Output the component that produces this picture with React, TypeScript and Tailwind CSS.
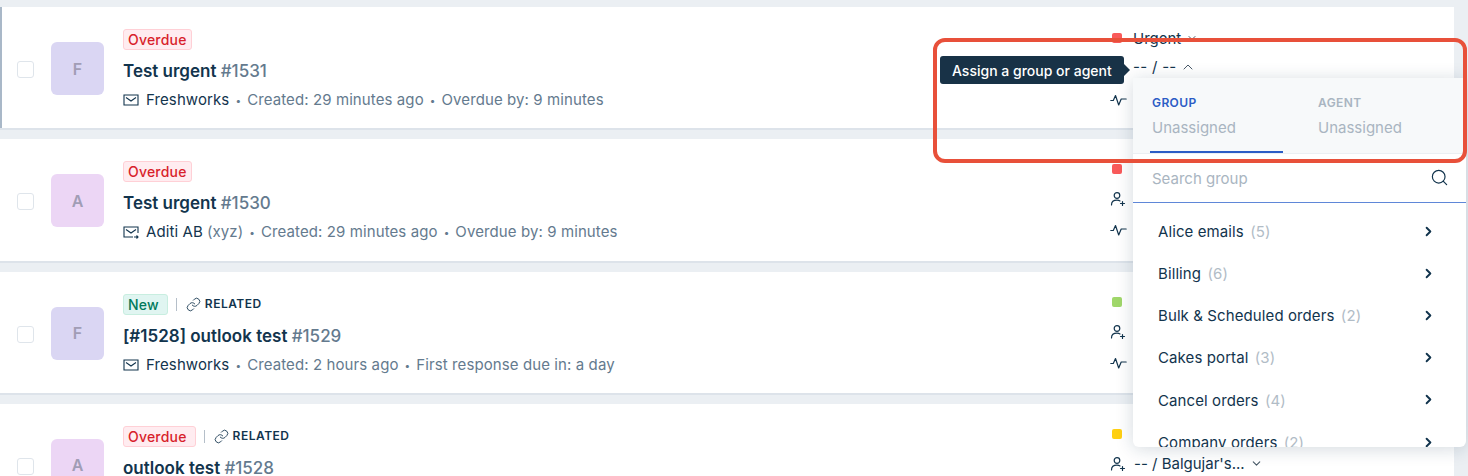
import { ChevronDown, ChevronRight, ChevronUp, Link, Search } from "lucide-react";

type Ticket = {
  letter: string;
  avatar: string;
  tag: "Overdue" | "New";
  related?: boolean;
  title: string;
  num: string;
  from: string;
  extra?: string;
  reply?: boolean;
  created: string;
  due: string;
  priority: string;
  accent?: boolean;
};

const tickets: Ticket[] = [
  { letter: "F", avatar: "bg-[#dad6f3]", tag: "Overdue", title: "Test urgent", num: "#1531", from: "Freshworks", created: "Created: 29 minutes ago", due: "Overdue by: 9 minutes", priority: "bg-[#f95a5a]", accent: true },
  { letter: "A", avatar: "bg-[#ecd6f5]", tag: "Overdue", title: "Test urgent", num: "#1530", from: "Aditi AB", extra: "(xyz)", reply: true, created: "Created: 29 minutes ago", due: "Overdue by: 9 minutes", priority: "bg-[#f95a5a]" },
  { letter: "F", avatar: "bg-[#dad6f3]", tag: "New", related: true, title: "[#1528] outlook test", num: "#1529", from: "Freshworks", created: "Created: 2 hours ago", due: "First response due in: a day", priority: "bg-[#a0d76a]" },
  { letter: "A", avatar: "bg-[#ecd6f5]", tag: "Overdue", related: true, title: "outlook test", num: "#1528", from: "Aditi AB", created: "Created: 3 hours ago", due: "Overdue by: 1 hour", priority: "bg-[#ffd012]" },
];

const groups = [
  ["Alice emails", "(5)"],
  ["Billing", "(6)"],
  ["Bulk & Scheduled orders", "(2)"],
  ["Cakes portal", "(3)"],
  ["Cancel orders", "(4)"],
  ["Company orders", "(2)"],
];

const Mail = ({ reply }: { reply?: boolean }) => (
  <svg width="16" height="14" viewBox="0 0 16 14" fill="none" stroke="#12344d" strokeWidth="1.1" className="shrink-0">
    <path d={reply ? "M15 8V2H1v10h9" : "M1 2h14v10H1z"} />
    <path d="M3 4.500 8 8l5-3.500" />
    {reply && <path d="M11 12h4m-1.500-1.500L15 12l-1.500 1.500" />}
  </svg>
);

const AgentIcon = () => (
  <svg width="16" height="16" viewBox="0 0 16 16" fill="none" stroke="#12344d" strokeWidth="1.2" strokeLinecap="round" className="shrink-0">
    <circle cx="7" cy="4.500" r="2.800" />
    <path d="M1.500 14c0-3 2.300-4.800 5.500-4.800 1.200 0 2.200.2 3 .7" />
    <path d="M12.500 10.500v4M10.500 12.500h4" />
  </svg>
);

const PulseIcon = () => (
  <svg width="17" height="14" viewBox="0 0 17 14" fill="none" stroke="#12344d" strokeWidth="1.2" strokeLinejoin="round" strokeLinecap="round" className="shrink-0">
    <path d="M.8 7.500h2.500L5.500 2.500l3.200 9.500 2.500-6h5" />
  </svg>
);

const Row = ({ t, index }: { t: Ticket; index: number }) => {
  // rows 2-4 sit partly under the popover, only what stays visible is drawn
  const assigned = index === 3;
  return (
    <div className="relative flex h-[123.33px] shrink-0 items-start border-b-2 border-[#dde3ea] bg-white">
      {t.accent && <div className="absolute inset-y-0 left-0 w-[2px] bg-[#a9b8c8]" />}
      <div className="ml-[17px] mt-[54px] h-[17px] w-[17px] shrink-0 rounded-[3px] border border-[#dfe5eb] bg-white" />
      <div className={`ml-[17px] mt-[35px] flex h-[53px] w-[53px] shrink-0 items-center justify-center rounded-md text-[16px] font-semibold text-[#a19db5] ${t.avatar}`}>
        {t.letter}
      </div>
      <div className="ml-[19px] mt-[22px] flex min-w-0 flex-col">
        <div className="flex h-[21px] items-center">
          <span className={`rounded-[3px] border pl-[4px] text-[14px] leading-[19px] font-medium tracking-[0.2px] ${t.related ? "pr-[8px]" : "pr-[4px]"} ${t.tag === "New" ? "border-[#c8eee0] bg-[#e0f5f1] text-[#00795b]" : "border-[#ffd0d6] bg-[#ffecf0] text-[#d81f2c]"}`}>
            {t.tag}
          </span>
          {t.related && (
            <span className="ml-[8px] flex items-center text-[12px] font-semibold tracking-[0.5px] text-[#12344d]">
              <span className="mr-[9px] h-[13px] w-px bg-[#b5bfc9]" />
              <Link size={15} strokeWidth={1.4} className="mr-[4px]" />
              RELATED
            </span>
          )}
        </div>
        <div className="mt-[10px] text-[17px] leading-[22px] font-semibold text-[#12344d]">
          {t.title} <span className="font-medium text-[#647a8e]">{t.num}</span>
        </div>
        <div className="mt-[8px] flex items-center text-[15px] leading-[20px] tracking-[0.1px] text-[#647a8e]">
          <Mail reply={t.reply} />
          <span className="ml-[7px] text-[#12344d]">{t.from}</span>
          {t.extra && <span className="ml-[4px]">{t.extra}</span>}
          <span className="mx-[6px] text-[10px]">•</span>
          <span>{t.created}</span>
          <span className="mx-[6px] text-[10px]">•</span>
          <span>{t.due}</span>
        </div>
      </div>
      <div className={`absolute left-[1110px] flex w-[200px] flex-col text-[15px] text-[#12344d] ${t.accent ? "top-[21px]" : "top-[20px]"}`}>
        <div className="flex h-[20px] items-center">
          <span className={`ml-[2px] h-[10px] w-[10px] rounded-[2px] ${t.priority}`} />
          {t.accent && (
            <>
              <span className="ml-[11px] pt-[2px]">Urgent</span>
              <ChevronDown size={12} className="ml-[5px] text-[#475867]" />
            </>
          )}
        </div>
        {t.accent ? (
          <div className="mt-[9px] flex h-[20px] items-center pl-[23px] tracking-[0.3px]">
            <span>-- / --</span>
            <ChevronUp size={16} strokeWidth={1.5} className="ml-[3px] text-[#475867]" />
          </div>
        ) : (
          <div className="mt-[10px] flex h-[20px] items-center">
            <AgentIcon />
            {assigned && (
              <>
                <span className="ml-[8px]">-- / Balgujar's...</span>
                <ChevronDown size={13} className="ml-[5px] text-[#475867]" />
              </>
            )}
          </div>
        )}
        <div className={`flex h-[20px] items-center ${t.accent ? "mt-[13px]" : "mt-[11px]"}`}>
          <PulseIcon />
        </div>
      </div>
    </div>
  );
};

export default function App() {
  return (
    <div className="relative h-[476px] w-[1468px] overflow-hidden bg-[#ebeff3] font-['Inter',sans-serif]">
      <div className="flex w-[1454px] flex-col gap-[9px] pt-[7px]">
        {tickets.map((t, i) => (
          <Row key={t.num} t={t} index={i} />
        ))}
      </div>

      {/* group/agent popover */}
      <div className="absolute left-[1133px] top-[78px] flex h-[369px] w-[333px] flex-col overflow-hidden rounded-b-md bg-white shadow-[0_2px_18px_rgba(18,52,77,0.18)]">
        <div className="flex h-[76px] shrink-0 border-b border-[#ebeff3] bg-[#f7f9fa]">
          <div className="ml-[17px] w-[133px] border-b-2 border-[#2c5cc5] pl-[2px] pt-[17px]">
            <div className="text-[12px] leading-[16px] font-semibold tracking-[0.4px] text-[#2c5cc5]">GROUP</div>
            <div className="mt-[7px] text-[15px] leading-[20px] text-[#a9b5c1]">Unassigned</div>
          </div>
          <div className="ml-[35px] pt-[17px]">
            <div className="text-[12px] leading-[16px] font-semibold tracking-[0.4px] text-[#a9b5c1]">AGENT</div>
            <div className="mt-[7px] text-[15px] leading-[20px] text-[#a9b5c1]">Unassigned</div>
          </div>
        </div>
        <div className="flex h-[49px] shrink-0 items-center justify-between border-b border-[#5f87d8] pl-[19px] pr-[17px]">
          <span className="pt-[3px] text-[15px] text-[#a9b5c1]">Search group</span>
          <Search size={19} strokeWidth={1.5} className="-mt-[1px] text-[#12344d]" />
        </div>
        <div className="flex flex-col pt-[7px]">
          {groups.map(([name, count]) => (
            <div key={name} className="flex h-[42.200px] shrink-0 items-center justify-between pl-[25px] pr-[30px] text-[15px] tracking-[0.1px] text-[#12344d]">
              <span className="pt-[2px]">
                {name} <span className="ml-[2px] text-[#b1bcc6]">{count}</span>
              </span>
              <ChevronRight size={15} strokeWidth={3} />
            </div>
          ))}
        </div>
      </div>

      {/* tooltip */}
      <div className="absolute left-[940px] top-[56px] flex h-[28px] w-[184px] items-center rounded-[3px] bg-[#183247] pl-[12px] text-[14px] font-medium text-white">
        Assign a group or agent
        <span className="absolute left-full top-[8px] h-0 w-0 border-y-[6px] border-l-[6px] border-y-transparent border-l-[#183247]" />
      </div>

      {/* annotation */}
      <div className="pointer-events-none absolute left-[933px] top-[38px] h-[125px] w-[534px] rounded-[12px] border-[4px] border-[#e8503a]" />
    </div>
  );
}
